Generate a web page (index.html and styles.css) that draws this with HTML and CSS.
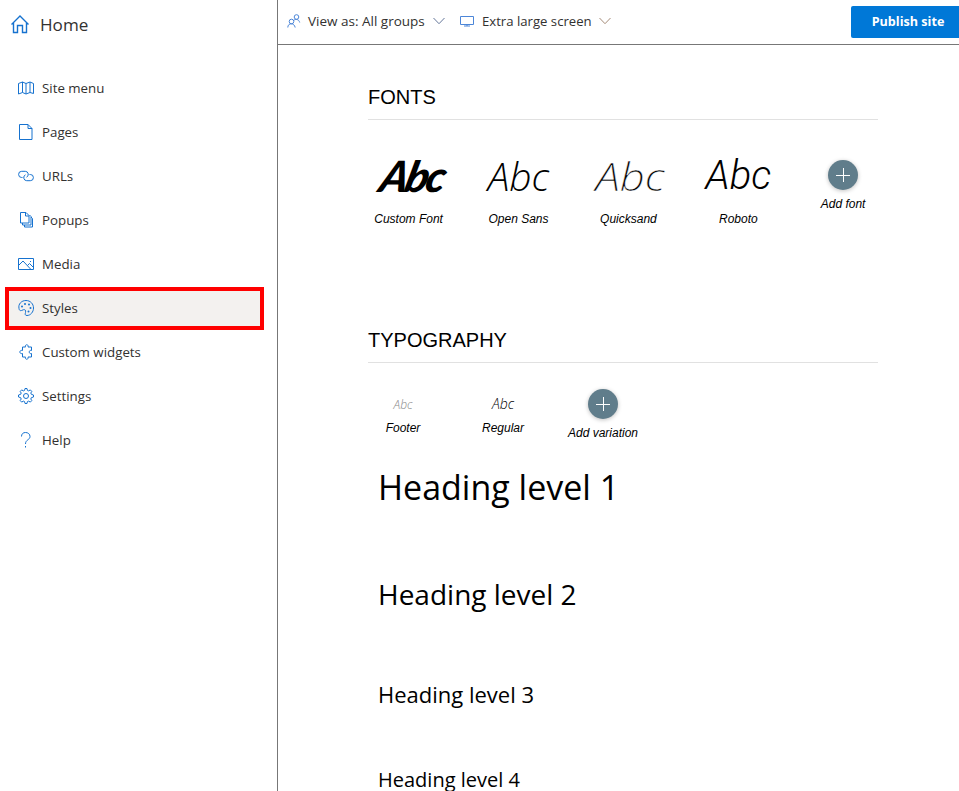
FILE: index.html
```html
<!DOCTYPE html>
<html lang="en">
<head>
<meta charset="utf-8">
<title>Styles</title>
<link rel="stylesheet" href="styles.css">
</head>
<body>
<div class="app">
  <aside class="sidebar">
    <div class="home">
      <svg width="20" height="20" viewBox="0 0 20 20"><path d="M1.5 10.5L10 2l8.500 8.500M3.500 9v9.500h4v-7h5v7h4V9" stroke-width="1.400"/></svg>
      <span>Home</span>
    </div>
    <nav class="nav">
      <a class="item"><svg viewBox="0 0 16 16"><path d="M.5 3.500l4-1.500 3.500 1.500L12 2l3.500 1.500v10L12 12.500l-4 1.500-3.500-1.500-4 1.500zM4.500 2v10.500M8 3.500V14M12 2v10.500"/></svg><span>Site menu</span></a>
      <a class="item"><svg viewBox="0 0 16 16"><path d="M1.500.5h8.500l4 4v11H1.500zM10 .5v4h4"/></svg><span>Pages</span></a>
      <a class="item"><svg viewBox="0 0 16 16"><path d="M4.500 9.500H3.700a3.100 3.100 0 0 1 0-6.200h3.600a3.100 3.100 0 0 1 1.200 5.900"/><path d="M11.500 6.500h.8a3.100 3.100 0 0 1 0 6.200H8.700a3.100 3.100 0 0 1-1.200-5.900"/></svg><span>URLs</span></a>
      <a class="item"><svg viewBox="0 0 16 16"><path d="M2.500.5H8l3 3v7.500H2.500zM7.500.5v3.500H11M4.500 11v2H13V4.500l-1.500-1.500M6.500 13v2h8V6.500L13 5"/></svg><span>Popups</span></a>
      <a class="item"><svg viewBox="0 0 16 16"><path d="M.5 2.500h15v11H.5zM.5 9.500L5 5l8 8.500M9.500 9.500l2-2 4 4M12 5.500h1"/></svg><span>Media</span></a>
      <a class="item active"><svg viewBox="0 0 16 16"><path d="M1 8.500C0 4 3.500.5 8 .5s7.500 3.500 7.500 7.500-3 7.500-6.500 7.500c-2 0-2-1.200-1.500-3 .6-2.200-.5-3.200-2-2.800L3.500 10.500C2 11 1.200 10 1 8.500z"/><g class="dots"><circle cx="4" cy="6.500" r="1"/><circle cx="7" cy="4" r="1"/><circle cx="11" cy="4.500" r="1"/><circle cx="12.500" cy="8" r="1"/><circle cx="10.500" cy="11.500" r="1"/></g></svg><span>Styles</span></a>
      <a class="item"><svg viewBox="0 0 16 16"><path d="M4.500 3h3c-1-3 3.500-3 2.500 0h3.500v3.500c-3-1-3 4 0 3V13H10c1 3-3.500 3-2.500 0h-3V9.500c-3.500 1-3.500-4 0-3z"/></svg><span>Custom widgets</span></a>
      <a class="item"><svg viewBox="0 0 16 16"><circle cx="8" cy="8" r="2.500"/><path d="M6.600 2.400L7 .5h2l.4 1.900 1.300.5 1.600-1 1.500 1.500-1 1.600.5 1.300 2.200.7v2l-2.200.7-.5 1.300 1 1.600-1.500 1.500-1.600-1-1.300.5-.4 1.900H7l-.4-1.900-1.300-.5-1.600 1-1.500-1.500 1-1.600-.5-1.300L.5 9V7l2.200-.7.5-1.300-1-1.600 1.500-1.500 1.600 1z"/></svg><span>Settings</span></a>
      <a class="item"><svg viewBox="0 0 16 16"><path d="M3.500 4.500C3.500 2 5 .5 7.500.5s4.500 1.500 4.500 4c0 3.500-4.500 3-4.500 7.500M7.500 14v1.500"/></svg><span>Help</span></a>
    </nav>
  </aside>
  <main class="main">
    <header class="topbar">
      <svg class="people" width="14" height="14" viewBox="0 0 14 14"><circle cx="9.500" cy="3" r="2.300"/><circle cx="4.500" cy="7.500" r="2.300"/><path d="M.8 13.500c0-5 6.500-5 7.400 0M7 6.200c2-1.500 5-.8 5.700 2.300"/></svg>
      <span class="view">View as: All groups</span>
      <svg class="chevron" width="12" height="8" viewBox="0 0 12 8"><path d="M.5 1L6 6.700 11.500 1"/></svg>
      <svg class="screen" width="14" height="12" viewBox="0 0 14 12"><path d="M.5 1.500h13v8H.5zM4 11h6M7 9.500V11"/></svg>
      <span class="size">Extra large screen</span>
      <svg class="chevron warm" width="12" height="8" viewBox="0 0 12 8"><path d="M.5 1L6 6.700 11.500 1"/></svg>
      <button class="publish">Publish site</button>
    </header>
    <div class="content">
      <h2 class="title">FONTS</h2>
      <div class="fonts">
        <div class="font"><div class="sample script">Abc</div><div class="label">Custom Font</div></div>
        <div class="font"><div class="sample open">Abc</div><div class="label">Open Sans</div></div>
        <div class="font"><div class="sample quick">Abc</div><div class="label">Quicksand</div></div>
        <div class="font"><div class="sample roboto">Abc</div><div class="label">Roboto</div></div>
        <div class="add"><svg class="plus" viewBox="0 0 30 30"><path d="M8 15.500h14M15.500 8v14"/></svg><div class="label">Add font</div></div>
      </div>
      <h2 class="title">TYPOGRAPHY</h2>
      <div class="types">
        <div class="type"><div class="mini footer">Abc</div><div class="label">Footer</div></div>
        <div class="type"><div class="mini">Abc</div><div class="label">Regular</div></div>
        <div class="add"><svg class="plus" viewBox="0 0 30 30"><path d="M8 15.500h14M15.500 8v14"/></svg><div class="label">Add variation</div></div>
      </div>
      <div class="headings">
        <h1 class="h1">Heading level 1</h1>
        <h2 class="h2">Heading level 2</h2>
        <h3 class="h3">Heading level 3</h3>
        <h4 class="h4">Heading level 4</h4>
      </div>
    </div>
  </main>
</div>
</body>
</html>
```
FILE: styles.css
```css
* { box-sizing: border-box; }
body { margin: 0; background: #fff; font-family: "Open Sans", sans-serif; color: #323130; }
h1, h2, h3, h4 { margin: 0; font-weight: 400; }
svg { fill: none; stroke: #1672cf; stroke-width: 1; flex: none; }
.app { display: flex; height: 791px; overflow: hidden; }
.sidebar { width: 278px; flex: none; border-right: 1px solid #777; }
.home { display: flex; align-items: center; gap: 10px; height: 50px; padding: 0 0 2px 10px; font-size: 17.1px; }
.nav { padding-top: 16px; }
.item { display: flex; align-items: center; gap: 8px; height: 44px; padding-left: 18px; font-size: 13.3px; }
.item svg { width: 16px; height: 16px; }
.item .dots { fill: #1672cf; stroke: none; }
.item.active { height: 43px; margin: 1px 13px 0 5px; padding: 0 0 1px 9px; border: 4px solid #f00; background: #f3f1ef; }
.main { flex: 1; min-width: 0; }
.topbar { display: flex; align-items: center; height: 45px; padding: 0 0 2px 9px; border-bottom: 1px solid #777; font-size: 13.5px; white-space: nowrap; }
.topbar span { width: 117px; margin-left: 7px; }
.topbar svg { stroke: #4c86d8; }
.topbar .size { width: 109px; margin-left: 8px; font-size: 13.15px; }
.topbar .chevron { margin-left: 8px; stroke: #65779a; }
.topbar .warm { stroke: #a58b78; }
.topbar .screen { margin-left: 15px; }
.publish { width: 108px; height: 32px; margin: 1px 0 0 auto; padding: 0 0 0 6px; border: 0; border-radius: 2px 0 0 2px; background: #0078d7; color: #fff; font: 700 12.6px "Open Sans", sans-serif; }
.content { width: 510px; margin-left: 90px; color: #000; }
.title { height: 75px; padding-top: 40px; border-bottom: 1px solid #e1e1e1; font: 20px/24px "Liberation Sans", sans-serif; }
.label { font: italic 12px/16px "Liberation Sans", sans-serif; white-space: nowrap; }
.fonts { display: flex; height: 168px; padding-top: 26px; text-align: center; }
.font { width: 110px; margin-left: -14.4px; margin-right: 14.4px; }
.fonts .add { margin-left: .4px; padding-top: 14px; }
.sample { height: 65px; font-size: 40px; line-height: 59px; font-style: italic; font-weight: 300; }
.open { font-size: 39px; }
.script { font-family: Lato, sans-serif; font-weight: 900; font-size: 43px; letter-spacing: -3px; transform: translateX(3px) skewX(-14deg); }
.quick { font-size: 39px; transform: translateX(2px) scaleX(1.12); -webkit-text-stroke: .4px #fff; }
.roboto { font-family: Roboto, sans-serif; line-height: 60px; }
.add { display: flex; flex-direction: column; align-items: center; gap: 6px; width: 70px; }
.plus { width: 30px; height: 30px; border-radius: 50%; background: #607d8b; stroke: #fff; box-shadow: 0 1px 4px rgba(0,0,0,.25); }
.types { display: flex; height: 87px; padding-top: 26px; text-align: center; }
.type { width: 70px; margin-right: 30px; }
.mini { height: 31px; font: italic 300 14px/30px "Open Sans", sans-serif; }
.mini.footer { font-size: 12px; line-height: 31px; color: #888; }
.headings { padding-left: 10px; white-space: nowrap; }
.h1 { height: 114px; font-size: 34px; line-height: 74px; }
.h2 { height: 108px; font-size: 28px; line-height: 60px; }
.h3 { height: 90px; font-size: 22px; line-height: 44px; }
.h4 { font-size: 20px; line-height: 36px; }
```
